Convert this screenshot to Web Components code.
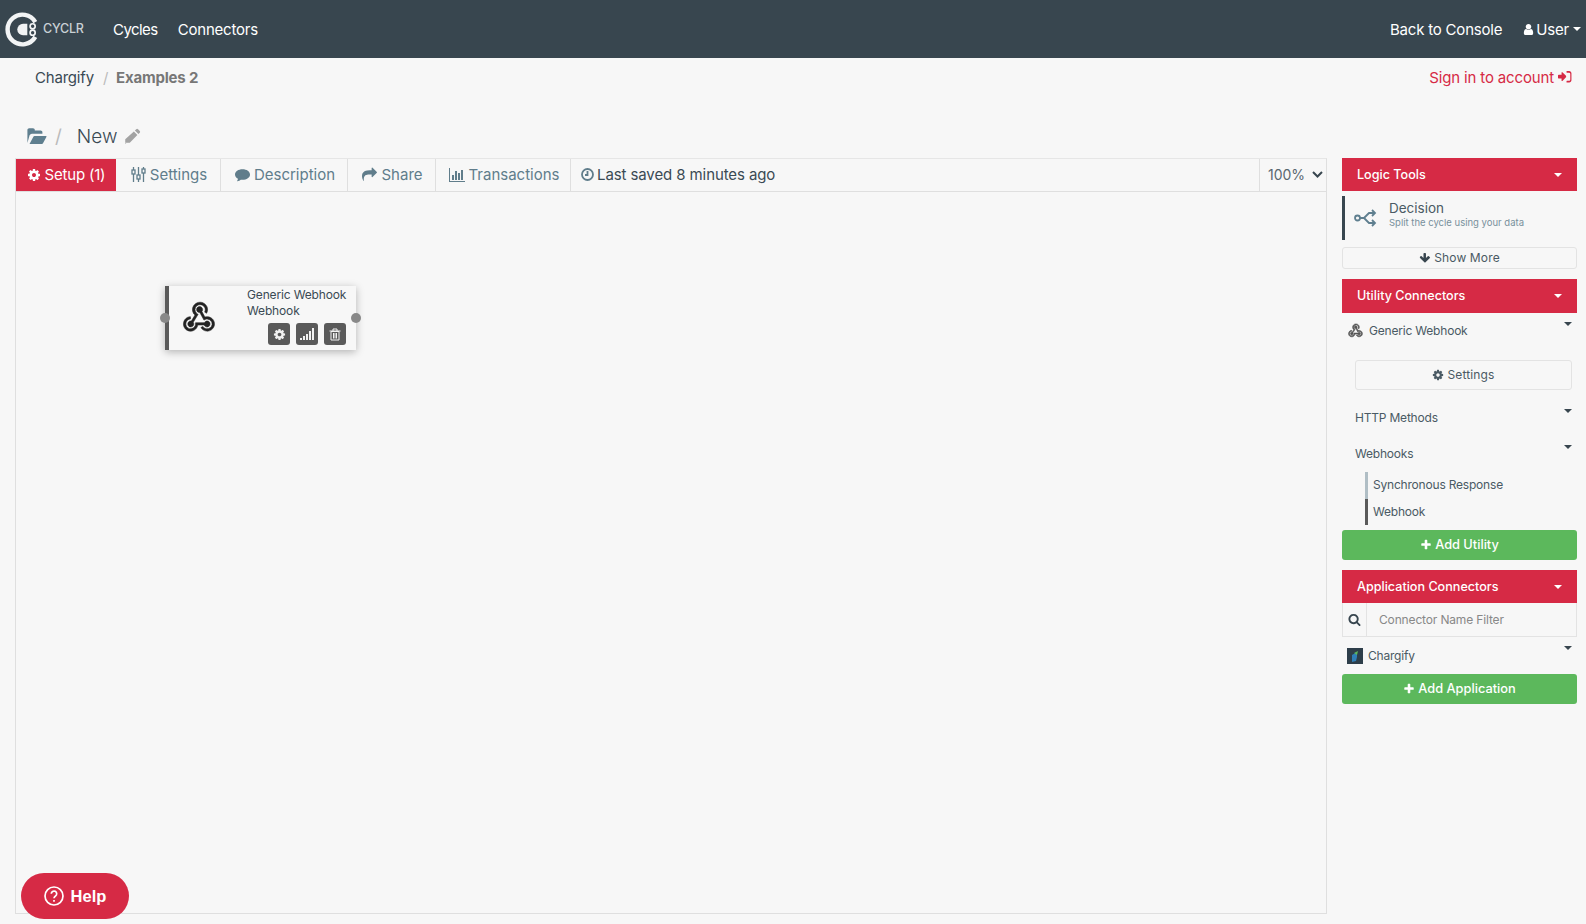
<!DOCTYPE html>
<html>
<head>
<meta charset="utf-8">
<title>Cyclr</title>
<style>
  html, body {
    margin: 0;
    height: 100%;
    background-color: #f7f7f7;
    color: #3a4a54;
    font-family: "Inter", "Open Sans", sans-serif;
    overflow: hidden;
  }
</style>
</head>
<body>
<app-shell></app-shell>

<script>
const ICONS = {
  cog: "M1152 896q0-106-75-181t-181-75-181 75-75 181 75 181 181 75 181-75 75-181zm512-109v222q0 12-8 23t-20 13l-185 28q-19 54-39 91 35 50 107 138 10 12 10 25t-9 23q-27 37-99 108t-94 71q-12 0-26-9l-138-108q-44 23-91 38-16 136-29 186-7 28-36 28h-222q-14 0-24.500-8.500t-11.500-21.500l-28-184q-49-16-90-37l-141 107q-10 9-25 9-14 0-25-11-126-114-165-168-7-10-7-23 0-12 8-23 15-21 51-66.500t54-70.500q-27-50-41-99l-183-27q-13-2-21-12.500t-8-23.500v-222q0-12 8-23t19-13l186-28q14-46 39-92-40-57-107-138-10-12-10-24 0-10 9-23 26-36 98.500-107.500t94.500-71.500q13 0 26 10l138 107q44-23 91-38 16-136 29-186 7-28 36-28h222q14 0 24.500 8.500t11.500 21.500l28 184q49 16 90 37l142-107q9-9 24-9 13 0 25 10 129 119 165 170 7 8 7 22 0 12-8 23-15 21-51 66.500t-54 70.500q26 50 41 98l183 28q13 2 21 12.500t8 23.500z",
  user: "M1536 1399q0 109-62.500 187t-150.500 78h-854q-88 0-150.500-78t-62.500-187q0-85 8.500-160.500t31.500-152 58.500-131 94-89 134.500-34.500q131 128 313 128t313-128q76 0 134.500 34.500t94 89 58.500 131 31.500 152 8.500 160.500zm-256-887q0 159-112.500 271.500t-271.500 112.500-271.500-112.500-112.500-271.500 112.500-271.500 271.500-112.500 271.500 112.500 112.500 271.500z",
  search: "M1216 832q0-185-131.500-316.500t-316.500-131.500-316.500 131.500-131.500 316.500 131.500 316.500 316.500 131.500 316.500-131.500 131.500-316.500zm512 832q0 52-38 90t-90 38q-54 0-90-38l-343-342q-179 124-399 124-143 0-273.500-55.500t-225-150-150-225-55.500-273.500 55.500-273.500 150-225 225-150 273.500-55.500 273.500 55.500 225 150 150 225 55.500 273.500q0 220-124 399l343 343q37 37 37 90z",
  plus: "M1600 736v192q0 40-28 68t-68 28h-416v416q0 40-28 68t-68 28h-192q-40 0-68-28t-28-68v-416h-416q-40 0-68-28t-28-68v-192q0-40 28-68t68-28h416v-416q0-40 28-68t68-28h192q40 0 68 28t28 68v416h416q40 0 68 28t28 68z",
  share: "M1792 640q0 26-19 45l-512 512q-19 19-45 19t-45-19-19-45v-256h-224q-98 0-175.500 6t-154 21.500-133 42.500-105.500 69.500-80 101-48.500 138.500-17.500 181q0 55 5 123 0 6 2.500 23.500t2.500 26.500q0 15-8.500 25t-23.500 10q-16 0-28-17-7-9-13-22t-13.500-30-10.500-24q-127-285-127-451 0-199 53-333 162-403 875-403h224v-256q0-26 19-45t45-19 45 19l512 512q19 19 19 45z",
  comment: "M896 256c495 0 896 261 896 640s-401 640-896 640c-70 0-138-5-203-15-100 90-240 150-420 175-20 2-35-15-25-33 50-75 90-150 105-250C140 1300 0 1110 0 896c0-379 401-640 896-640z",
  folder: "M120 1450V350q0-60 45-105t105-45h330q60 0 105 45t45 105v40h500q60 0 105 45t45 105v130H500q-60 0-110 30t-85 85z M300 1540 L640 900 q25-50 80-50 H1700 q70 0 50 60 L1450 1480 q-30 60-90 60z",
  pencil: "M1290 130q40-40 95-40t95 40l180 180q40 40 40 95t-40 95l-140 140-370-370z M1040 380l370 370-800 800H130v-370z M130 1550v120h120z",
  arrowDown: "M1660 800q0 50-35 85l-650 650q-35 35-85 35t-85-35L155 885q-35-35-35-85t35-85l75-75q35-35 85-35t85 35l270 270V260q0-50 35-85t85-35h130q50 0 85 35t35 85v650l270-270q35-35 85-35t85 35l75 75q35 35 35 85z",
  signIn: "M1040 896q0 26-19 45L565 1397q-19 19-45 19t-45-19-19-45v-260H96q-40 0-68-28t-28-68V696q0-40 28-68t68-28h360V340q0-26 19-45t45-19 45 19l456 456q19 19 19 45z M1720 480v830q0 120-85 205t-205 85h-300q-40 0-40-40v-130q0-40 40-40h280q66 0 113-47t47-113V500q0-66-47-113t-113-47h-280q-40 0-40-40V170q0-40 40-40h300q120 0 205 85t85 205z"
};

class FaIcon extends HTMLElement {
  connectedCallback() {
    const size = this.getAttribute("size") || 14;
    this.attachShadow({ mode: "open" }).innerHTML = `
      <style>:host { display: inline-flex; flex: none; } svg { display: block; fill: currentColor; }</style>
      <svg width="${size}" height="${size}" viewBox="0 0 1792 1792"><path d="${ICONS[this.getAttribute("name")]}"/></svg>`;
  }
}
customElements.define("fa-icon", FaIcon);

const headerTemplate = document.createElement("template");
headerTemplate.innerHTML = /* html */ `
  <style>
    :host {
      display: flex;
      align-items: center;
      height: 58px;
      background-color: #38464f;
      color: #fff;
      font-size: 15px;
      letter-spacing: -0.2px;
    }
    .logo {
      display: flex;
      align-items: center;
      width: 113px;
      padding-left: 4px;
      box-sizing: border-box;
      color: #c9d0d4;
      font-size: 12.5px;
      font-weight: 500;
    }
    .logo svg { margin-right: 4px; }
    .logo span { margin-bottom: 2px; }
    nav { display: flex; gap: 20px; }
    .cycles { letter-spacing: -0.55px; }
    .right { margin-left: auto; display: flex; align-items: center; padding-right: 5px; }
    .user { display: flex; align-items: center; gap: 1px; margin-left: 20px; }
    .caret {
      margin-left: 3px;
      border-top: 4px solid #fff;
      border-left: 4px solid transparent;
      border-right: 4px solid transparent;
    }
  </style>
  <div class="logo">
    <svg width="35" height="35" viewBox="0 0 33 33">
      <path d="M29.500 9.500A14 14 0 1 0 29.500 23.500" fill="none" stroke="#f2f4f5" stroke-width="4.200"/>
      <path d="M18 11a5.500 5.500 0 0 0 0 11h4V11z" fill="#f2f4f5"/>
      <circle cx="27" cy="13.500" r="2.400" fill="#38464f" stroke="#f2f4f5" stroke-width="1.600"/>
      <circle cx="27" cy="19.500" r="2.400" fill="#38464f" stroke="#f2f4f5" stroke-width="1.600"/>
    </svg>
    <span>CYCLR</span>
  </div>
  <nav><span class="cycles">Cycles</span><span>Connectors</span></nav>
  <div class="right">
    <span>Back to Console</span>
    <span class="user"><fa-icon name="user" size="13"></fa-icon>User<span class="caret"></span></span>
  </div>`;

class AppHeader extends HTMLElement {
  constructor() {
    super();
    this.attachShadow({ mode: "open" });
    this.shadowRoot.appendChild(headerTemplate.content.cloneNode(true));
  }
}
customElements.define("app-header", AppHeader);

const crumbTemplate = document.createElement("template");
crumbTemplate.innerHTML = /* html */ `
  <style>
    :host {
      display: flex;
      align-items: center;
      height: 38px;
      padding: 0 14px 2px 35px;
      font-size: 15px;
      letter-spacing: -0.2px;
    }
    .sep { color: #bbb; margin: 0 8px 0 9px; }
    b { color: #777; font-weight: 700; }
    .sign { margin-left: auto; color: #d62a45; display: flex; align-items: center; gap: 4px; letter-spacing: -0.15px; }
  </style>
  <span>Chargify</span><span class="sep">/</span><b>Examples 2</b>
  <span class="sign">Sign in to account <fa-icon name="signIn" size="14"></fa-icon></span>`;

class CrumbBar extends HTMLElement {
  constructor() {
    super();
    this.attachShadow({ mode: "open" });
    this.shadowRoot.appendChild(crumbTemplate.content.cloneNode(true));
  }
}
customElements.define("crumb-bar", CrumbBar);

const titleTemplate = document.createElement("template");
titleTemplate.innerHTML = /* html */ `
  <style>
    :host {
      display: flex;
      align-items: center;
      height: 60px;
      padding: 16px 0 0 26px;
      box-sizing: border-box;
      font-size: 19px;
    }
    .folder { color: #5f7f8f; }
    .sep { color: #bbb; margin: 0 15px 0 8px; }
    .name { font-weight: 300; }
    .pencil { color: #a3a3a3; margin-left: 7px; }
  </style>
  <fa-icon class="folder" name="folder" size="21"></fa-icon>
  <span class="sep">/</span>
  <span class="name">New</span>
  <fa-icon class="pencil" name="pencil" size="17"></fa-icon>`;

class TitleRow extends HTMLElement {
  constructor() {
    super();
    this.attachShadow({ mode: "open" });
    this.shadowRoot.appendChild(titleTemplate.content.cloneNode(true));
  }
}
customElements.define("title-row", TitleRow);

class TabItem extends HTMLElement {
  constructor() {
    super();
    this.attachShadow({ mode: "open" }).innerHTML = /* html */ `
      <style>
        :host {
          display: flex;
          align-items: center;
          justify-content: center;
          gap: 4px;
          box-sizing: border-box;
          height: 100%;
          color: #607d8b;
          border-right: 1px solid #dfdfdf;
          padding: 0 0 1px 2px;
        }
        :host([active]) { background-color: #d62a45; color: #fff; border-right: none; letter-spacing: -0.2px; padding-left: 0; }
        :host([plain]) { border-right: none; color: #3a4a54; justify-content: flex-start; padding-left: 10px; letter-spacing: -0.1px; gap: 3px; }
      </style>
      <slot name="icon"></slot><slot></slot>`;
  }
}
customElements.define("tab-item", TabItem);

const tabBarTemplate = document.createElement("template");
tabBarTemplate.innerHTML = /* html */ `
  <style>
    :host {
      display: flex;
      align-items: center;
      height: 34px;
      box-sizing: border-box;
      border-bottom: 1px solid #dfdfdf;
      border-top: 1px solid #e6e6e6;
      border-right: 1px solid #dfdfdf;
      border-left: 1px solid #dfdfdf;
      font-size: 15px;
    }
    .zoom {
      margin-left: auto;
      display: flex;
      align-items: center;
      justify-content: space-between;
      box-sizing: border-box;
      width: 67px;
      height: 100%;
      padding: 0 3px 1px 8px;
      border-left: 1px solid #dfdfdf;
      color: #5a6770;
      font-size: 14px;
    }
    .zoom svg { display: block; }
    .bars { display: block; }
    .sliders { display: block; }
  </style>
  <tab-item active style="width:100px"><fa-icon slot="icon" name="cog" size="14"></fa-icon>Setup (1)</tab-item>
  <tab-item style="width:105px">
    <svg slot="icon" class="sliders" width="15" height="15" viewBox="0 0 15 15" fill="none" stroke="currentColor" stroke-width="1.300">
      <path d="M2.500 0v15M7.500 0v15M12.500 0v15"/>
      <rect x="1" y="3" width="3" height="4" fill="#f7f7f7"/><rect x="6" y="8" width="3" height="4" fill="#f7f7f7"/><rect x="11" y="2" width="3" height="4" fill="#f7f7f7"/>
    </svg>Settings</tab-item>
  <tab-item style="width:127px"><fa-icon slot="icon" name="comment" size="15"></fa-icon>Description</tab-item>
  <tab-item style="width:88px"><fa-icon slot="icon" name="share" size="15"></fa-icon>Share</tab-item>
  <tab-item style="width:135px">
    <svg slot="icon" class="bars" width="16" height="14" viewBox="0 0 16 14" fill="currentColor">
      <path d="M0 0h1v13h15v1H0z"/><rect x="3" y="7" width="2" height="5"/><rect x="6" y="3" width="2" height="9"/><rect x="9" y="5" width="2" height="7"/><rect x="12" y="2" width="2" height="10"/>
    </svg>Transactions</tab-item>
  <tab-item plain>
    <svg slot="icon" width="13" height="13" viewBox="0 0 13 13" fill="none" stroke="#607d8b" stroke-width="1.800" style="display:block">
      <circle cx="6.500" cy="6.500" r="5.500"/><path d="M6.500 3v4H4"/>
    </svg>Last saved 8 minutes ago</tab-item>
  <div class="zoom"><span>100%</span>
    <svg width="11" height="7" viewBox="0 0 11 7" fill="none" stroke="#38464f" stroke-width="2"><path d="M1 1l4.500 4.500L10 1"/></svg>
  </div>`;

class TabBar extends HTMLElement {
  constructor() {
    super();
    this.attachShadow({ mode: "open" });
    this.shadowRoot.appendChild(tabBarTemplate.content.cloneNode(true));
  }
}
customElements.define("tab-bar", TabBar);

const WEBHOOK_PATH = "M10.46,19C9,21.07 6.15,21.59 4.09,20.15C2.04,18.71 1.56,15.84 3,13.75C3.87,12.5 5.21,11.83 6.58,11.77L6.63,13.2C5.72,13.27 4.84,13.74 4.27,14.56C3.27,16 3.58,17.94 4.95,18.91C6.33,19.87 8.26,19.5 9.26,18.07C9.57,17.62 9.75,17.13 9.82,16.63V15.62L15.4,15.58L15.47,15.47C16,14.55 17.15,14.23 18.05,14.75C18.95,15.27 19.26,16.43 18.73,17.35C18.2,18.26 17.04,18.58 16.14,18.06C15.73,17.83 15.44,17.46 15.31,17.04L11.24,17.06C11.13,17.73 10.87,18.38 10.46,19M17.74,11.86C20.27,12.17 22.07,14.44 21.76,16.93C21.45,19.43 19.15,21.2 16.62,20.89C15.13,20.71 13.9,19.86 13.19,18.68L14.43,17.96C14.92,18.73 15.75,19.28 16.75,19.41C18.5,19.62 20.05,18.43 20.26,16.76C20.47,15.09 19.23,13.56 17.5,13.35C16.96,13.29 16.44,13.36 15.97,13.53L15.12,13.97L12.54,9.2H12.32C11.26,9.17 10.44,8.29 10.47,7.25C10.5,6.21 11.4,5.4 12.45,5.44C13.5,5.5 14.33,6.37 14.29,7.41C14.28,7.85 14.11,8.25 13.84,8.56L15.73,12.05C16.35,11.85 17.04,11.77 17.74,11.86M8.25,9.14C7.25,6.77 8.39,4.04 10.83,3.04C13.27,2.04 16.06,3.16 17.06,5.53C17.65,6.91 17.5,8.42 16.8,9.64L15.57,8.92C16,8.06 16.09,7.07 15.68,6.13C15,4.53 13.14,3.77 11.5,4.43C9.86,5.1 9.09,6.96 9.76,8.56C10.04,9.22 10.5,9.73 11.06,10.09L11.45,10.31L8.39,15.28C8.42,15.33 8.46,15.39 8.5,15.5C9,16.41 8.66,17.56 7.74,18.06C6.83,18.56 5.67,18.22 5.17,17.31C4.66,16.39 5,15.24 5.91,14.74C6.3,14.5 6.74,14.47 7.17,14.55L9.47,10.8C8.95,10.46 8.5,9.85 8.25,9.14Z";

const nodeTemplate = document.createElement("template");
nodeTemplate.innerHTML = /* html */ `
  <style>
    :host {
      position: absolute;
      display: block;
      box-sizing: border-box;
      background-color: #f7f7f7;
      border-left: 4px solid #5a5a5a;
      box-shadow: 0 2px 8px rgba(0, 0, 0, .28);
      color: #3a4a54;
      font-size: 12px;
      line-height: 16px;
      letter-spacing: -0.15px;
    }
    .logo { position: absolute; left: 11px; top: 12px; color: #222; }
    .text { position: absolute; left: 78px; top: 1px; white-space: nowrap; }
    .tools { position: absolute; right: 10px; bottom: 1px; display: flex; gap: 6px; bottom: 5px; }
    .tools span {
      display: flex;
      align-items: center;
      justify-content: center;
      width: 22px;
      height: 22px;
      border-radius: 3px;
      background-color: #5a5a5a;
      color: #f2f2f2;
    }
    .handle {
      position: absolute;
      top: 27px;
      width: 10px;
      height: 10px;
      border-radius: 50%;
      background-color: #888;
    }
    .in { left: -9px; }
    .out { right: -5px; }
  </style>
  <span class="handle in"></span>
  <svg class="logo" width="38" height="38" viewBox="0 0 24 24" fill="currentColor" stroke="currentColor" stroke-width=".35"><path d="${WEBHOOK_PATH}"/></svg>
  <div class="text"><slot></slot></div>
  <div class="tools">
    <span><fa-icon name="cog" size="13"></fa-icon></span>
    <span>
      <svg width="14" height="12" viewBox="0 0 14 12" fill="currentColor"><rect x="0" y="10" width="2" height="2"/><rect x="3" y="8" width="2" height="4"/><rect x="6" y="6" width="2" height="6"/><rect x="9" y="3" width="2" height="9"/><rect x="12" y="0" width="2" height="12"/></svg>
    </span>
    <span>
      <svg width="12" height="13" viewBox="0 0 12 13" fill="none" stroke="currentColor" stroke-width="1"><path d="M2 3.500h8v8.500H2zM.5 3h11M4 3V1h4v2M4.500 5v5.500M6 5v5.500M7.500 5v5.500"/></svg>
    </span>
  </div>
  <span class="handle out"></span>`;

class FlowNode extends HTMLElement {
  constructor() {
    super();
    this.attachShadow({ mode: "open" });
    this.shadowRoot.appendChild(nodeTemplate.content.cloneNode(true));
  }
}
customElements.define("flow-node", FlowNode);

const canvasTemplate = document.createElement("template");
canvasTemplate.innerHTML = /* html */ `
  <style>
    :host {
      position: relative;
      display: block;
      flex: 1;
      border-left: 1px solid #dfdfdf;
      border-right: 1px solid #dfdfdf;
      border-bottom: 1px solid #dfdfdf;
      box-sizing: border-box;
    }
  </style>
  <slot></slot>`;

class FlowCanvas extends HTMLElement {
  constructor() {
    super();
    this.attachShadow({ mode: "open" });
    this.shadowRoot.appendChild(canvasTemplate.content.cloneNode(true));
  }
}
customElements.define("flow-canvas", FlowCanvas);

const panelHeadTemplate = document.createElement("template");
panelHeadTemplate.innerHTML = /* html */ `
  <style>
    :host {
      display: flex;
      align-items: center;
      justify-content: space-between;
      height: 33px;
      padding: 0 15px;
      background-color: #d62a45;
      color: #fff;
      font-size: 12.6px;
      font-weight: 500;
    }
    span { margin-bottom: 1px; }
    i { border-top: 4px solid #fff; border-left: 4px solid transparent; border-right: 4px solid transparent; }
  </style>
  <span><slot></slot></span><i></i>`;

class PanelHead extends HTMLElement {
  constructor() {
    super();
    this.attachShadow({ mode: "open" });
    this.shadowRoot.appendChild(panelHeadTemplate.content.cloneNode(true));
  }
}
customElements.define("panel-head", PanelHead);

class SideRow extends HTMLElement {
  constructor() {
    super();
    this.attachShadow({ mode: "open" }).innerHTML = /* html */ `
      <style>
        :host {
          position: relative;
          display: flex;
          align-items: center;
          gap: 5px;
          font-size: 12px;
          letter-spacing: -0.2px;
          color: #4a5a64;
        }
        i {
          position: absolute;
          right: 5px;
          top: var(--arrow-top, 9px);
          border-top: 4px solid #38464f;
          border-left: 4px solid transparent;
          border-right: 4px solid transparent;
        }
      </style>
      <slot name="icon"></slot><slot></slot><i></i>`;
  }
}
customElements.define("side-row", SideRow);

class OutlineButton extends HTMLElement {
  constructor() {
    super();
    this.attachShadow({ mode: "open" }).innerHTML = /* html */ `
      <style>
        :host {
          display: flex;
          align-items: center;
          justify-content: center;
          gap: 3px;
          box-sizing: border-box;
          border: 1px solid #e3e3e3;
          border-radius: 3px;
          padding-bottom: 1px;
          font-size: 12px;
          letter-spacing: .15px;
          color: #4a5a64;
        }
      </style>
      <slot></slot>`;
  }
}
customElements.define("outline-button", OutlineButton);

class AddButton extends HTMLElement {
  constructor() {
    super();
    this.attachShadow({ mode: "open" }).innerHTML = /* html */ `
      <style>
        :host {
          display: flex;
          align-items: center;
          justify-content: center;
          gap: 3px;
          box-sizing: border-box;
          height: 30px;
          padding-bottom: 1px;
          border-radius: 3px;
          background-color: #5cb85c;
          color: #fff;
          font-size: 12.8px;
          font-weight: 500;
        }
      </style>
      <fa-icon name="plus" size="12"></fa-icon><slot></slot>`;
  }
}
customElements.define("add-button", AddButton);

const sideTemplate = document.createElement("template");
sideTemplate.innerHTML = /* html */ `
  <style>
    :host {
      display: flex;
      flex-direction: column;
      flex: none;
      width: 235px;
      color: #4a5a64;
    }
    .decision {
      display: flex;
      align-items: center;
      height: 44px;
      margin: 5px 0 7px;
      border-left: 3px solid #38464f;
      box-sizing: border-box;
    }
    .decision svg { margin: 0 11px 0 9px; color: #5f7f8f; }
    .decision .text { padding-bottom: 7px; }
    .decision .name { font-size: 13.5px; line-height: 16px; color: #4a5a64; }
    .decision .hint { font-size: 9.500px; line-height: 14px; color: #78909c; }
    .more { height: 22px; margin-bottom: 10px; }
    .more fa-icon { color: #38464f; }
    .logo { color: #555; display: block; }
    .settings { height: 30px; margin: 12px 5px 0 13px; }
    .indent { margin-left: 13px; --arrow-top: 10px; }
    .sub {
      margin-left: 23px;
      padding: 0 0 1px 5px;
      height: 26.5px;
      display: flex;
      align-items: center;
      font-size: 12px;
      letter-spacing: -0.2px;
      border-left: 3px solid #b0bec5;
      box-sizing: border-box;
    }
    .sub.dark { border-left-color: #5a5a5a; padding-bottom: 0; }
    .filter {
      display: flex;
      height: 34px;
      box-sizing: border-box;
      border: 1px solid #e3e3e3;
      border-top: none;
      font-size: 12px;
      letter-spacing: -0.15px;
      color: #888;
    }
    .filter .glass {
      display: flex;
      align-items: center;
      justify-content: center;
      width: 23px;
      border-right: 1px solid #e3e3e3;
      color: #38464f;
    }
    .filter .ph { display: flex; align-items: center; padding-left: 12px; }
  </style>
  <panel-head>Logic Tools</panel-head>
  <div class="decision">
    <svg width="24" height="18" viewBox="0 0 24 18" fill="none" stroke="currentColor" stroke-width="1.800">
      <circle cx="3.500" cy="9" r="2.500"/><path d="M6 9h4l5-5h6M10 9l5 5h6M18 1l3 3-3 3M18 11l3 3-3 3"/>
    </svg>
    <div class="text"><div class="name">Decision</div><div class="hint">Split the cycle using your data</div></div>
  </div>
  <outline-button class="more"><fa-icon name="arrowDown" size="12"></fa-icon>Show More</outline-button>
  <panel-head style="height:34px">Utility Connectors</panel-head>
  <side-row style="height:35px;padding-left:5px">
    <svg slot="icon" class="logo" width="17" height="17" viewBox="0 0 24 24" fill="currentColor" stroke="currentColor" stroke-width=".8"><path d="${WEBHOOK_PATH}"/></svg>
    <span>Generic Webhook</span>
  </side-row>
  <outline-button class="settings"><fa-icon name="cog" size="12"></fa-icon>Settings</outline-button>
  <side-row class="indent" style="height:36px;margin-top:9px">HTTP Methods</side-row>
  <side-row class="indent" style="height:36px">Webhooks</side-row>
  <div class="sub" style="margin-top:1px">Synchronous Response</div>
  <div class="sub dark">Webhook</div>
  <add-button style="margin:5px 0 10px">Add Utility</add-button>
  <panel-head>Application Connectors</panel-head>
  <div class="filter">
    <span class="glass"><fa-icon name="search" size="13"></fa-icon></span>
    <span class="ph">Connector Name Filter</span>
  </div>
  <side-row style="height:37px;padding-left:5px">
    <svg slot="icon" width="16" height="16" viewBox="0 0 16 16" style="display:block">
      <rect width="16" height="16" fill="#2e3e4a"/><path d="M5 7l5-3v5l-1 4-4 1z" fill="#2f7fb8"/><path d="M7 5l4-2-1 4z" fill="#5cb85c"/>
    </svg>
    <span>Chargify</span>
  </side-row>
  <add-button>Add Application</add-button>`;

class SidePanel extends HTMLElement {
  constructor() {
    super();
    this.attachShadow({ mode: "open" });
    this.shadowRoot.appendChild(sideTemplate.content.cloneNode(true));
  }
}
customElements.define("side-panel", SidePanel);

class HelpButton extends HTMLElement {
  constructor() {
    super();
    this.attachShadow({ mode: "open" }).innerHTML = /* html */ `
      <style>
        :host {
          position: fixed;
          left: 21px;
          bottom: 5px;
          display: flex;
          align-items: center;
          justify-content: center;
          gap: 7px;
          width: 108px;
          height: 46px;
          border-radius: 23px;
          background-color: #d62a45;
          color: #fff;
          font-family: "Liberation Sans", sans-serif;
          font-size: 16.5px;
          font-weight: 700;
        }
      </style>
      <svg width="20" height="20" viewBox="0 0 20 20" fill="none" stroke="#fff" stroke-width="1.700">
        <circle cx="10" cy="10" r="9"/><path d="M7.300 7.800a2.700 2.700 0 1 1 4.200 2.200c-1 .7-1.500 1.100-1.500 2.200"/><path d="M10 14v1.800"/>
      </svg>
      <span>Help</span>`;
  }
}
customElements.define("help-button", HelpButton);

const shellTemplate = document.createElement("template");
shellTemplate.innerHTML = /* html */ `
  <style>
    :host { display: flex; flex-direction: column; height: 100vh; overflow: hidden; }
    .work { display: flex; flex: 1; gap: 15px; padding: 0 9px 10px 15px; min-height: 0; }
    .main { display: flex; flex-direction: column; flex: 1; min-width: 0; }
  </style>
  <app-header></app-header>
  <crumb-bar></crumb-bar>
  <title-row></title-row>
  <div class="work">
    <div class="main">
      <tab-bar></tab-bar>
      <flow-canvas>
        <flow-node style="left:149px;top:94px;width:191px;height:64px">Generic Webhook<br>Webhook</flow-node>
      </flow-canvas>
    </div>
    <side-panel></side-panel>
  </div>
  <help-button></help-button>`;

class AppShell extends HTMLElement {
  constructor() {
    super();
    this.attachShadow({ mode: "open" });
    this.shadowRoot.appendChild(shellTemplate.content.cloneNode(true));
  }
}
customElements.define("app-shell", AppShell);
</script>
</body>
</html>
